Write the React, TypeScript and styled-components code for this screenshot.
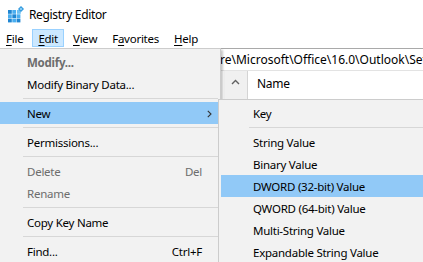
import React from "react";
import styled, { createGlobalStyle } from "styled-components";

const Global = createGlobalStyle`
  html, body { margin: 0; padding: 0; background: #ffffff; }
  body {
    width: 423px; height: 262px; overflow: hidden;
    font-family: "Segoe UI", "Noto Sans", "Liberation Sans", sans-serif;
    font-size: 11.5px; letter-spacing: -0.25px; color: #000;
  }
  #root { width: 423px; height: 262px; position: relative; overflow: hidden; }
`;

const Window = styled.div`
  position: relative;
  width: 423px;
  height: 262px;
  display: flex;
  flex-direction: column;
  background: #ffffff;
  overflow: hidden;
`;

const TitleBar = styled.div`
  height: 28px;
  display: flex;
  align-items: center;
  padding-left: 8px;
  gap: 4px;
  font-size: 12px;
  letter-spacing: -0.35px;
  flex-shrink: 0;
`;

const MenuBar = styled.div`
  height: 20px;
  display: flex;
  align-items: stretch;
  gap: 3px;
  flex-shrink: 0;
`;

const BarItem = styled.div<{ $active?: boolean }>`
  display: flex;
  align-items: center;
  padding: 0 5px;
  box-sizing: border-box;
  border: 1px solid ${(p) => (p.$active ? "#99d1ff" : "transparent")};
  background: ${(p) => (p.$active ? "#cce8ff" : "transparent")};
  margin-top: 1px;
  margin-bottom: 1px;
  u { text-decoration: underline; text-underline-offset: 2px; }
`;

const AddressBar = styled.div`
  height: 21px;
  border-top: 1px solid #a9a9a9;
  border-bottom: 1px solid #e3e3e3;
  display: flex;
  align-items: center;
  overflow: hidden;
  white-space: nowrap;
  flex-shrink: 0;
  font-size: 12px;
  letter-spacing: 0;
`;

const AddressText = styled.span`
  margin-left: -8px;
`;

const Body = styled.div`
  flex: 1;
  display: flex;
  background: #f0f0f0;
`;

const TreePane = styled.div`
  width: 224px;
  background: #ffffff;
  flex-shrink: 0;
`;

const ScrollBar = styled.div`
  width: 24px;
  background: #f0f0f0;
  border-right: 1px solid #d4d4d4;
  display: flex;
  justify-content: center;
  padding-top: 8px;
  box-sizing: border-box;
  flex-shrink: 0;
`;

const ListPane = styled.div`
  flex: 1;
  background: #ffffff;
  display: flex;
  flex-direction: column;
`;

const ListHeader = styled.div`
  height: 25px;
  display: flex;
  align-items: center;
  padding-left: 9px;
  font-size: 12px;
`;

const ListRow = styled.div`
  height: 20px;
  display: flex;
  align-items: center;
  padding-left: 8px;
`;

const Menu = styled.div<{ $top: number; $left: number; $width: number }>`
  position: absolute;
  top: ${(p) => p.$top}px;
  left: ${(p) => p.$left}px;
  width: ${(p) => p.$width}px;
  box-sizing: border-box;
  background: #f2f2f2;
  border: 1px solid #cccccc;
  padding: 2px;
  box-shadow: 2px 2px 2px rgba(0, 0, 0, 0.22);
  display: flex;
  flex-direction: column;
`;

const Item = styled.div<{ $hl?: boolean; $disabled?: boolean; $bold?: boolean }>`
  height: 22px;
  display: flex;
  align-items: center;
  padding-left: 32px;
  padding-right: 16px;
  background: ${(p) => (p.$hl ? "#91c9f7" : "transparent")};
  color: ${(p) => (p.$disabled ? "#6d6d6d" : "#000000")};
  font-weight: ${(p) => (p.$bold ? 700 : 400)};
  position: relative;
  white-space: nowrap;
`;

const Label = styled.span`
  flex: 1;
`;

const Shortcut = styled.span``;

const Chevron = styled.svg`
  position: absolute;
  right: 6px;
  top: 8px;
`;

const Separator = styled.div`
  height: 7px;
  margin-left: 28px;
  display: flex;
  align-items: center;
  &::after {
    content: "";
    flex: 1;
    height: 1px;
    background: #d7d7d7;
  }
`;

const RegIcon = () => (
  <svg width="17" height="17" viewBox="0 0 17 17">
    {[0, 1, 2].map((r) =>
      [0, 1, 2].map((c) => {
        if (r === 0 && c === 2) return null;
        const light = (r + c) % 2 === 1;
        return (
          <rect
            key={`${r}-${c}`}
            x={0 + c * 4.3}
            y={4 + r * 4.3}
            width={3.8}
            height={3.8}
            fill={light ? "#48aef0" : "#1f86d2"}
          />
        );
      })
    )}
    <rect x="9" y="4" width="3.8" height="3.8" fill="#6cc0f2" />
    <path d="M13 0 L16 3 L13 6 L10 3 Z" fill="#2b95dc" />
    <path d="M13 1.4 L14.6 3 L13 4.6 L11.4 3 Z" fill="#8fd0f7" />
  </svg>
);

const ValueIcon = () => (
  <svg width="16" height="16" viewBox="0 0 16 16">
    <rect x="1.5" y="1.5" width="10" height="13" fill="#ffffff" stroke="#8c8c8c" />
  </svg>
);

export default function App() {
  return (
    <>
      <Global />
      <Window>
        <TitleBar>
          <RegIcon />
          <span>Registry Editor</span>
        </TitleBar>
        <MenuBar>
          <BarItem><span><u>F</u>ile</span></BarItem>
          <BarItem $active><span><u>E</u>dit</span></BarItem>
          <BarItem><span><u>V</u>iew</span></BarItem>
          <BarItem><span>F<u>a</u>vorites</span></BarItem>
          <BarItem><span><u>H</u>elp</span></BarItem>
        </MenuBar>
        <AddressBar>
          <AddressText>
            Computer\HKEY_CURRENT_USER\Software\Microsoft\Office\16.0\Outlook\Settings
          </AddressText>
        </AddressBar>
        <Body>
          <TreePane />
          <ScrollBar>
            <svg width="9" height="6" viewBox="0 0 9 6">
              <path d="M1 5 L4.5 1.5 L8 5" fill="none" stroke="#606060" strokeWidth="1.4" />
            </svg>
          </ScrollBar>
          <ListPane>
            <ListHeader>Name</ListHeader>
            <ListRow>
              <ValueIcon />
            </ListRow>
          </ListPane>
        </Body>

        <Menu $top={48} $left={-8} $width={229}>
          <Item $disabled $bold><Label>Modify...</Label></Item>
          <Item><Label>Modify Binary Data...</Label></Item>
          <Separator />
          <Item $hl>
            <Label>New</Label>
            <Chevron width="5" height="8" viewBox="0 0 5 8">
              <path d="M0.8 0.8 L4 4 L0.8 7.2" fill="none" stroke="#333" strokeWidth="1.1" />
            </Chevron>
          </Item>
          <Separator />
          <Item><Label>Permissions...</Label></Item>
          <Separator />
          <Item $disabled><Label>Delete</Label><Shortcut>Del</Shortcut></Item>
          <Item $disabled><Label>Rename</Label></Item>
          <Separator />
          <Item><Label>Copy Key Name</Label></Item>
          <Separator />
          <Item><Label>Find...</Label><Shortcut>Ctrl+F</Shortcut></Item>
        </Menu>

        <Menu $top={99} $left={218} $width={240}>
          <Item><Label>Key</Label></Item>
          <Separator />
          <Item><Label>String Value</Label></Item>
          <Item><Label>Binary Value</Label></Item>
          <Item $hl><Label>DWORD (32-bit) Value</Label></Item>
          <Item><Label>QWORD (64-bit) Value</Label></Item>
          <Item><Label>Multi-String Value</Label></Item>
          <Item><Label>Expandable String Value</Label></Item>
        </Menu>
      </Window>
    </>
  );
}
